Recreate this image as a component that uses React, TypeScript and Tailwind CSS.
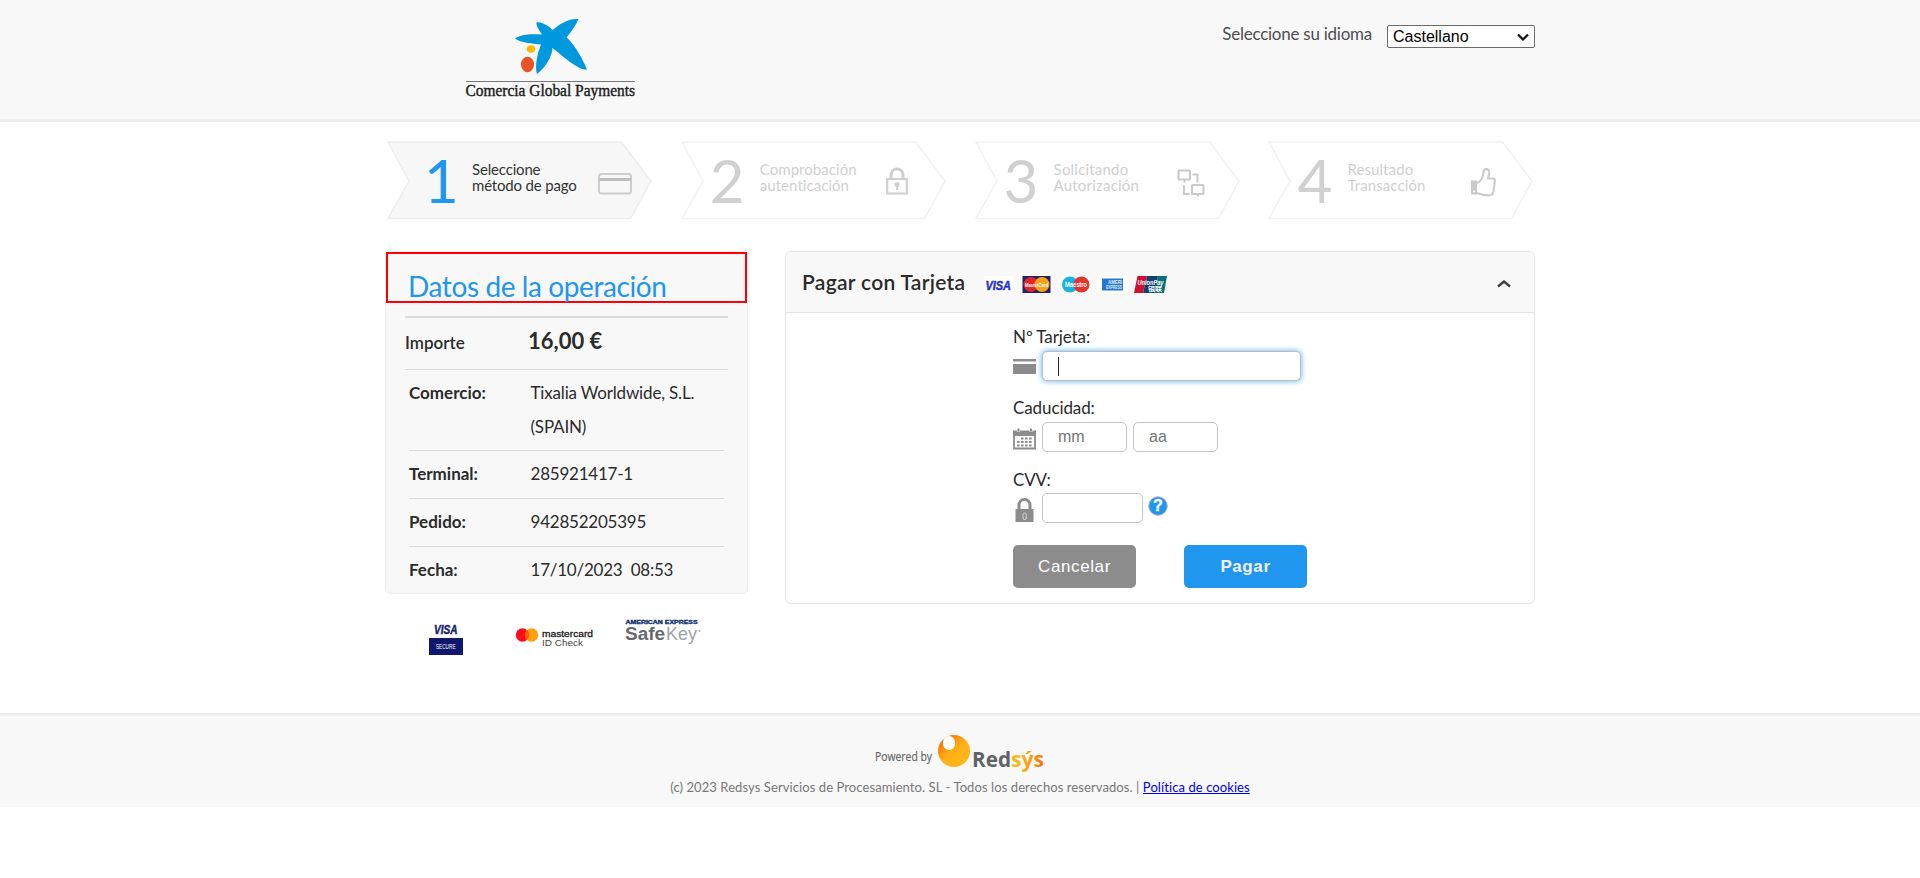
import React from "react";

const stepData = [
  { n: "1", a: "Seleccione", b: "método de pago", active: true, num: "ml-[37px] w-[48px]", track: "tracking-[-0.17px]", icon: "card" },
  { n: "2", a: "Comprobación", b: "autenticación", active: false, num: "ml-[29px] w-[50px]", track: "tracking-[0.05px]", icon: "lock" },
  { n: "3", a: "Solicitando", b: "Autorización", active: false, num: "ml-[29px] w-[50px]", track: "tracking-[0.2px]", icon: "net" },
  { n: "4", a: "Resultado", b: "Transacción", active: false, num: "ml-[29px] w-[50px]", track: "tracking-[0.1px]", icon: "thumb" },
];

function StepIcon({ kind }: { kind: string }) {
  if (kind === "card")
    return (
      <svg width="34" height="22" viewBox="0 0 34 22" fill="none" className="mt-[32px]">
        <rect x="1" y="1" width="32" height="19.500" rx="2.500" stroke="#cdcdcd" strokeWidth="2" />
        <rect x="1.500" y="5" width="31" height="3" fill="#c0c0c0" />
      </svg>
    );
  if (kind === "lock")
    return (
      <svg width="22" height="28" viewBox="0 0 22 28" fill="none" className="mr-[18px] mt-[26px]">
        <path d="M5 12V8.500C5 4.500 7.500 2 11 2s6 2.500 6 6.500V12" stroke="#d0d0d0" strokeWidth="3.200" />
        <rect x="1.200" y="12" width="19.600" height="14.500" stroke="#d0d0d0" strokeWidth="2.200" />
        <circle cx="11" cy="17.500" r="2.600" fill="#d0d0d0" />
        <path d="M11 18v5" stroke="#d0d0d0" strokeWidth="2.200" />
      </svg>
    );
  if (kind === "net")
    return (
      <svg width="28" height="28" viewBox="0 0 28 28" fill="none" stroke="#c9c9c9" strokeWidth="2" className="mr-[15px] mt-[28px]">
        <rect x="1.500" y="1.500" width="11.500" height="9" rx="0.500" />
        <rect x="15" y="16" width="11.500" height="9" rx="0.500" />
        <path d="M7.500 10.500v3M15.500 5.500H20.500v8M21 25v2.500M7 16v9H12.500" />
      </svg>
    );
  return (
    <svg width="28" height="30" viewBox="0 0 28 30" fill="none" className="mr-[15px] mt-[26px]">
      <path d="M1 13.500H7V27.500H1Z" fill="#c9c9c9" />
      <circle cx="4" cy="24.500" r="1" fill="#fff" />
      <path
        d="M7 16C10.500 14.500 13 10 13.500 5.500c.2-4.500 5.500-4.500 5.700-.3 0 2.300-.7 4.300-1.200 6.300H22.500c2 0 2.700 1.500 2.300 3.200L23.500 24.500c-.5 2.600-2 3.700-4.500 3.900-4.500.2-7.500-.9-12-2.400"
        stroke="#cccccc"
        strokeWidth="2.200"
      />
    </svg>
  );
}

function Steps() {
  return (
    <div className="flex gap-[27.800px] pl-[2px]">
      {stepData.map((s) => (
        <div key={s.n} className="relative h-[79px] w-[266px] shrink-0">
          <svg className="absolute inset-0" width="266" height="79" viewBox="0 0 266 79">
            <path
              d="M1 1H234.500L264 40 243.500 77.500H1L22 40Z"
              fill={s.active ? "#f7f7f7" : "#ffffff"}
              stroke={s.active ? "#ededed" : "#f1f1f1"}
              strokeWidth="1.500"
            />
          </svg>
          <div className="relative flex h-full items-start">
            <span className={`${s.num} mt-[3px] text-[60px] leading-[72px] ${s.active ? "text-[#2196ef]" : "text-[#d0d0d0]"}`}>{s.n}</span>
            <span className={`mt-[20px] flex-1 whitespace-nowrap text-[15px] leading-[16px] ${s.track} ${s.active ? "text-[#333]" : "text-[#d0d0d0]"}`}>
              {s.a}
              <br />
              {s.b}
            </span>
            <div className="mr-[21px]">
              <StepIcon kind={s.icon} />
            </div>
          </div>
        </div>
      ))}
    </div>
  );
}

function BankLogo() {
  return (
    <svg width="176" height="90" viewBox="0 0 176 90" className="overflow-visible">
      <path
        d="M50 20.500C57 15.500 68 16 77 16.500 74.500 12.500 71 8 71.500 4.500 75 3.500 83 7 87.500 12 94 6.500 103 0 113.500 1 111 7 106 14 101.500 19.500 108 25 116 37 122 51.500 113 52.500 98 38 87.500 30 87 39 80 50 72 56 69.500 48 72.500 35 76 26.500 67 25.500 56 25 50 20.500Z"
        fill="#0098dc"
      />
      <ellipse cx="66" cy="31" rx="4.200" ry="3.800" fill="#fcb900" />
      <ellipse cx="62.500" cy="46.500" rx="6.500" ry="7.800" fill="#ea5326" />
      <path d="M1 63.500H170" stroke="#777" strokeWidth="1" />
      <text x="0.500" y="78" fontFamily="Liberation Serif, serif" fontSize="16" fill="#1b1b1b" stroke="#1b1b1b" strokeWidth="0.400" textLength="169.500" lengthAdjust="spacingAndGlyphs">
        Comercia Global Payments
      </text>
    </svg>
  );
}

function CardLogos() {
  return (
    <svg width="184" height="17" viewBox="0 0 184 17" className="ml-[19px] mt-[5px] overflow-visible">
      <g fontFamily="Liberation Sans, sans-serif" fontWeight="bold">
        <rect width="29" height="17" fill="#fff" />
        <text x="1.500" y="13.500" fontSize="13" fontStyle="italic" fill="#2330c8" stroke="#2330c8" strokeWidth="0.500" textLength="25.500" lengthAdjust="spacingAndGlyphs">VISA</text>
        <rect x="38.500" width="28" height="17" fill="#1d2464" />
        <circle cx="47" cy="8.500" r="7.500" fill="#e0262b" />
        <circle cx="58" cy="8.500" r="7.500" fill="#f8a21c" />
        <text x="41" y="11" fontSize="6" fill="#fff" textLength="23" lengthAdjust="spacingAndGlyphs">MasterCard</text>
        <rect x="77" width="29" height="17" fill="#fff" />
        <circle cx="86" cy="8.500" r="8" fill="#19b4dc" />
        <circle cx="97.500" cy="8.500" r="8" fill="#e5332e" />
        <text x="81" y="11" fontSize="6.500" fill="#fff" textLength="22" lengthAdjust="spacingAndGlyphs">Maestro</text>
        <rect x="113" width="31" height="17" fill="#fff" />
        <rect x="118" y="2.500" width="21" height="12" fill="#2476cf" />
        <text x="124" y="8" fontSize="5.500" fill="#e4f0ff" textLength="14" lengthAdjust="spacingAndGlyphs">AMERI</text>
        <text x="122" y="13" fontSize="5.500" fill="#e4f0ff" textLength="16" lengthAdjust="spacingAndGlyphs">EXPRESS</text>
        <path d="M153.500 0H163L159 17H150Z" fill="#d0102f" />
        <path d="M163 0H174L170 17H159Z" fill="#123f70" />
        <path d="M174 0H183L180 17H170Z" fill="#087177" />
        <text x="153.500" y="9" fontSize="7" fontStyle="italic" fill="#fff" textLength="26" lengthAdjust="spacingAndGlyphs">UnionPay</text>
        <text x="164" y="14.500" fontSize="6" fontFamily="Noto Sans CJK SC, sans-serif" fill="#fff" textLength="14" lengthAdjust="spacingAndGlyphs">银联</text>
      </g>
    </svg>
  );
}

const rows = [
  { k: "Terminal:", v: "285921417-1" },
  { k: "Pedido:", v: "942852205395" },
  { k: "Fecha:", v: "17/10/2023  08:53" },
];

function Summary() {
  return (
    <div className="h-[343px] w-[363px] rounded-[6px] border border-[#ececec] bg-[#f8f8f8] text-[17px] text-[#2b2b2b]">
      <div className="h-[51px] border-2 border-[#fb0007] pl-[20px] pt-[11px]">
        <h1 className="whitespace-nowrap text-[28px] leading-[42px] tracking-[-0.400px] text-[#2196ef]">Datos de la operación</h1>
      </div>
      <div className="mx-[19px] mt-[13px] flex h-[53px] items-center border-t-2 border-[#dcdcdc]">
        <span className="-mt-[2px] w-[123px] font-semibold">Importe</span>
        <span className="-mt-[6px] text-[22px] font-bold">16,00 €</span>
      </div>
      <div className="mx-[19px] border-t border-[#dcdcdc]" />
      <div className="mx-[23px] flex h-[80px] pt-[6px] leading-[34px]">
        <span className="w-[121.500px] font-bold">Comercio:</span>
        <span className="tracking-[-0.17px]">
          Tixalia Worldwide, S.L.
          <br />
          (SPAIN)
        </span>
      </div>
      {rows.map((r) => (
        <div key={r.k} className="mx-[23px] flex h-[48px] border-t border-[#dcdcdc] pt-[6px] leading-[34px]">
          <span className="w-[121.500px] font-bold">{r.k}</span>
          <span className="whitespace-pre tracking-[-0.23px]">{r.v}</span>
        </div>
      ))}
    </div>
  );
}

function SecureLogos() {
  return (
    <svg width="363" height="50" viewBox="0 0 363 50" className="mt-[18px]" fontFamily="Liberation Sans, sans-serif">
      <text x="49" y="21.500" fontSize="12" fontWeight="bold" fontStyle="italic" fill="#1a1f71" stroke="#1a1f71" strokeWidth="0.500" textLength="23.500" lengthAdjust="spacingAndGlyphs">VISA</text>
      <rect x="44" y="26" width="34" height="17" fill="#12176e" />
      <text x="51" y="37" fontSize="6.500" fill="#fff" textLength="19.500" lengthAdjust="spacingAndGlyphs">SECURE</text>
      <circle cx="137.500" cy="23" r="6.700" fill="#ff0a1b" />
      <circle cx="146.500" cy="23" r="6.700" fill="#ff9f0b" />
      <path d="M142 18a6.700 6.700 0 0 1 0 10a6.700 6.700 0 0 1 0-10" fill="#ff5f00" />
      <text x="157" y="25" fontSize="8.500" fill="#222" stroke="#222" strokeWidth="0.300" textLength="51" lengthAdjust="spacingAndGlyphs">mastercard</text>
      <text x="157" y="33.500" fontSize="8.500" fill="#444" textLength="41" lengthAdjust="spacingAndGlyphs">ID Check</text>
      <text x="240.500" y="12" fontSize="5" fontWeight="bold" fill="#0a2a6c" stroke="#0a2a6c" strokeWidth="0.300" textLength="72" lengthAdjust="spacingAndGlyphs">AMERICAN EXPRESS</text>
      <text x="240" y="28" fontSize="18" fontWeight="bold" fill="#666a6e" textLength="40" lengthAdjust="spacingAndGlyphs">Safe</text>
      <text x="281" y="28" fontSize="18" fill="#a0a3a6" textLength="31" lengthAdjust="spacingAndGlyphs">Key</text>
      <circle cx="314.500" cy="19" r="1" fill="#a0a3a6" />
    </svg>
  );
}

const field = "h-[30px] rounded-[5px] border border-[#c4c4c4] bg-white pl-[15px] font-['Liberation_Sans',sans-serif] text-[16px] text-[#333] placeholder-[#757575] outline-none";

function PayForm() {
  return (
    <div className="h-[353px] w-[750px] rounded-[6px] border border-[#e3e3e3] bg-white text-[#2b2b2b]">
      <div className="flex h-[61px] items-center rounded-t-[5px] border-b border-[#e3e3e3] bg-[#f8f8f8] pl-[16px]">
        <span className="w-[163px] whitespace-nowrap text-[21px] font-semibold tracking-[0.300px]">Pagar con Tarjeta</span>
        <CardLogos />
        <svg width="14" height="9" viewBox="0 0 14 9" className="ml-auto mr-[23px] mt-[2px]" fill="none">
          <path d="M1 7.500 7 2.500l6 5" stroke="#3c3c3c" strokeWidth="2.300" />
        </svg>
      </div>
      <div className="pl-[227px] pt-[12px] text-[17px] leading-[24px]">
        <div className="tracking-[-0.100px]">Nº Tarjeta:</div>
        <div className="flex items-center pt-[2px]">
          <svg width="23" height="16" viewBox="0 0 23 16" className="mr-[6px]">
            <path d="M0 1H23V3.500H0ZM0 6H23V16H0Z" fill="#8c8c8c" />
          </svg>
          <div className="flex h-[30px] w-[259px] items-center rounded-[5px] border border-[#bcbcbc] bg-white pl-[15px] shadow-[0_0_5px_1px_#7cc4f8]">
            <span className="h-[19px] w-px bg-[#222]" />
          </div>
        </div>
        <div className="mt-[15px] tracking-[-0.100px]">Caducidad:</div>
        <div className="flex items-center pt-[2px]">
          <svg width="23" height="22" viewBox="0 0 23 22" className="mr-[6px] mt-[3px]" fill="none">
            <path d="M1 8V20.500H22V8" stroke="#8c8c8c" strokeWidth="1.800" />
            <path d="M0 2.500H23V8H0Z" fill="#8c8c8c" />
            <path d="M5.500 1.500v2.500M18 1.500v2.500" stroke="#e6e6e6" strokeWidth="3.200" />
            <path d="M5.500 0.500v3M18 0.500v3" stroke="#8c8c8c" strokeWidth="2" />
            <path d="M8 10.500H19M4 14H19M4 17.500H19" stroke="#8c8c8c" strokeWidth="2.200" strokeDasharray="2.600 1.400" />
          </svg>
          <input className={`${field} w-[85px]`} placeholder="mm" />
          <input className={`${field} ml-[6px] w-[85px]`} placeholder="aa" />
        </div>
        <div className="mt-[16px] tracking-[-0.200px]">CVV:</div>
        <div className="flex items-center pt-[1px]">
          <svg width="19" height="24" viewBox="0 0 19 24" className="ml-[2px] mr-[8px] mt-[3px]" fill="none">
            <path d="M4 12V7.500C4 4 6 1.600 9.500 1.600S15 4 15 7.500V12" stroke="#8c8c8c" strokeWidth="3" />
            <path d="M.5 11H18.500V24H.5Z" fill="#8c8c8c" />
            <rect x="8" y="15" width="3.200" height="6.500" rx="1.500" stroke="#d8d8d8" />
          </svg>
          <input className={`${field} w-[101px]`} />
          <svg width="20" height="20" viewBox="0 0 20 20" className="-mt-[4px] ml-[5px]">
            <circle cx="10" cy="10" r="9.300" fill="#2196ef" stroke="#b5b5b5" />
            <text x="10" y="15" textAnchor="middle" fontFamily="Liberation Sans, sans-serif" fontWeight="bold" fontSize="16" fill="#fff" stroke="#fff" strokeWidth="0.400">?</text>
          </svg>
        </div>
        <div className="mt-[22px] flex gap-[48px] font-['Liberation_Sans',sans-serif] text-[17px]">
          <button className="h-[43px] w-[123px] rounded-[5px] bg-[#8c8c8c] tracking-[0.600px] text-white">Cancelar</button>
          <button className="h-[43px] w-[123px] rounded-[5px] bg-[#2196ef] font-bold tracking-[0.600px] text-[#f0f0f0]">Pagar</button>
        </div>
      </div>
    </div>
  );
}

function RedsysLogo() {
  return (
    <svg width="170" height="38" viewBox="0 0 170 38" fontFamily="Open Sans, sans-serif" className="shrink-0 overflow-visible">
      <defs>
        <linearGradient id="ball" x1="0" y1="0.200" x2="0.600" y2="0.900">
          <stop offset="0" stopColor="#f96a08" />
          <stop offset="0.600" stopColor="#ffb117" />
          <stop offset="1" stopColor="#ffb41a" />
        </linearGradient>
        <linearGradient id="sys" x1="0" y1="0" x2="1" y2="0">
          <stop offset="0.300" stopColor="#fdb515" />
          <stop offset="1" stopColor="#f7740c" />
        </linearGradient>
      </defs>
      <text x="0" y="27" fontSize="12" fill="#666" stroke="#666" strokeWidth="0.200" textLength="57" lengthAdjust="spacingAndGlyphs">Powered by</text>
      <circle cx="79" cy="17" r="16" fill="url(#ball)" />
      <ellipse cx="74" cy="9" rx="6.200" ry="7" fill="#fff" />
      <text x="97" y="33" fontSize="22" fontWeight="bold" fill="#606367" textLength="39" lengthAdjust="spacingAndGlyphs">Red</text>
      <text x="136" y="33" fontSize="22" fontWeight="bold" fill="url(#sys)" textLength="33" lengthAdjust="spacingAndGlyphs">sýs</text>
    </svg>
  );
}

export default function App() {
  return (
    <div className="min-h-[878px] bg-white font-[Lato,sans-serif]">
      <header className="h-[122px] border-b-[3px] border-[#ededed] bg-[#f8f8f8]">
        <div className="mx-auto flex w-[1150px] items-start justify-between">
          <div className="ml-[79.500px] mt-[18px]">
            <BankLogo />
          </div>
          <div className="mt-[24px] flex">
            <span className="mr-[15px] text-[17px] leading-[20px] tracking-[-0.250px] text-[#4d4d4d]">Seleccione su idioma</span>
            <div className="mt-[1px] flex h-[23px] w-[148px] items-center justify-between rounded-[2px] border border-[#6b6b6b] bg-white pl-[5px] pr-[5px] font-['Liberation_Sans',sans-serif] text-[16px] text-black">
              Castellano
              <svg width="12" height="8" viewBox="0 0 12 8" fill="none">
                <path d="M1 1.500 6 6.500l5-5" stroke="#111" strokeWidth="2.200" />
              </svg>
            </div>
          </div>
        </div>
      </header>
      <main className="mx-auto h-[591px] w-[1150px] pt-[19px]">
        <Steps />
        <div className="mt-[31px] flex justify-between">
          <div>
            <Summary />
            <SecureLogos />
          </div>
          <PayForm />
        </div>
      </main>
      <footer className="flex h-[94px] flex-col items-center border-t-[3px] border-[#ededed] bg-[#f8f8f8] pt-[18px]">
        <RedsysLogo />
        <p className="mt-[6px] whitespace-nowrap text-[13px] leading-[18px] tracking-[0.085px] text-[#777]">
          (c) 2023 Redsys Servicios de Procesamiento. SL - Todos los derechos reservados. |{" "}
          <a href="#" className="text-[#0000ee] underline">Política de cookies</a>
        </p>
      </footer>
    </div>
  );
}
